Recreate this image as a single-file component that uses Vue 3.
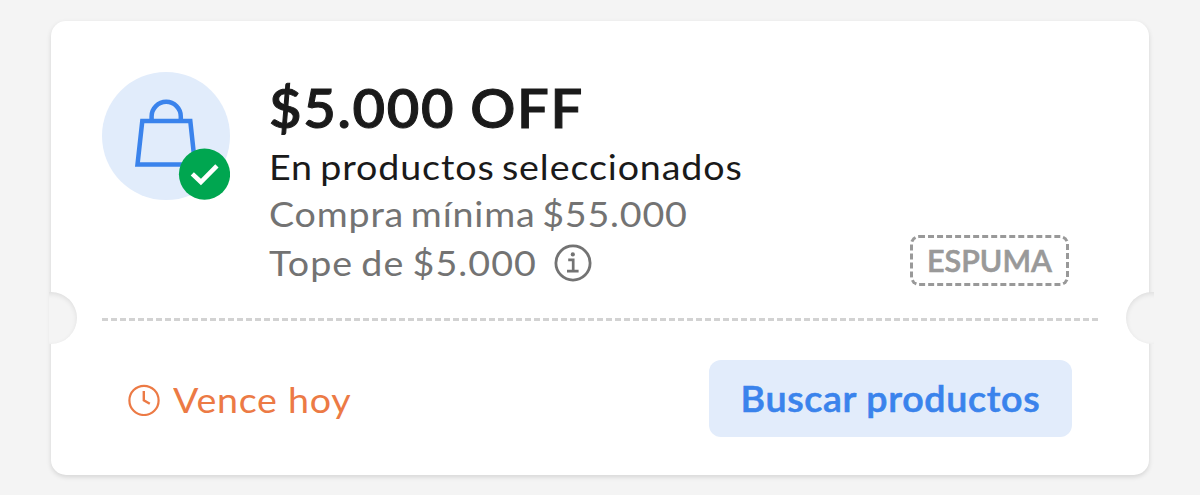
<script setup>
const coupon = {
  title: '$5.000 OFF',
  scope: 'En productos seleccionados',
  minimum: 'Compra mínima $55.000',
  cap: 'Tope de $5.000',
  code: 'ESPUMA',
  expiry: 'Vence hoy',
  action: 'Buscar productos',
}
</script>

<template>
  <main class="page">
    <article class="card">
      <span class="notch left"></span>
      <span class="notch right"></span>
      <section class="top">
        <svg class="badge" width="128" height="128" viewBox="0 0 128 128">
          <circle cx="64" cy="64" r="64" fill="#e1ecfb" />
          <g fill="none" stroke="#3a83ec" stroke-width="4.5">
            <path d="M40.3 49.1H88.3L93 92.6H35.5Z" />
            <path d="M49.6 49V44.4a14.6 14.6 0 0 1 29.2 0V49" />
          </g>
          <circle cx="102.5" cy="102.2" r="25.6" fill="#00a650" />
          <path d="M90.3 101.8L98.9 110L114.9 93.8" fill="none" stroke="#fff" stroke-width="4.6" />
        </svg>
        <div class="details">
          <h1><span class="wide t-title">{{ coupon.title }}</span></h1>
          <p class="dark"><span class="wide t-scope">{{ coupon.scope }}</span></p>
          <p class="min"><span class="wide t-min">{{ coupon.minimum }}</span></p>
          <p class="cap">
            <span class="wide t-cap">{{ coupon.cap }}</span>
            <svg width="38" height="38" viewBox="0 0 38 38" fill="none" stroke="#737373">
              <circle cx="19" cy="19" r="17.1" stroke-width="2.8" />
              <path d="M14.2 15.8H19.2V27M13 27.1H24.6" stroke-width="2.7" />
              <circle cx="18.8" cy="10.4" r="2.1" fill="#737373" stroke="none" />
            </svg>
          </p>
        </div>
        <div class="code"><span>{{ coupon.code }}</span></div>
      </section>
      <div class="divider"></div>
      <section class="bottom">
        <div class="expiry">
          <svg width="32" height="32" viewBox="0 0 32 32" fill="none" stroke="#ec7a45">
            <circle cx="16" cy="16.4" r="14.6" stroke-width="2.2" />
            <path d="M15.8 7V16.3L21.8 19.7" stroke-width="2.4" />
          </svg>
          <span class="wide t-exp">{{ coupon.expiry }}</span>
        </div>
        <button type="button"><span class="wide t-btn">{{ coupon.action }}</span></button>
      </section>
    </article>
  </main>
</template>

<style>
body {
  background: #f4f4f4;
}
</style>

<style scoped>
.page {
  box-sizing: border-box;
  height: 495px;
  padding: 21px 51px 20px;
  background: #f4f4f4;
  font-family: Lato, 'Open Sans', sans-serif;
  overflow: hidden;
}
.card {
  position: relative;
  box-sizing: border-box;
  height: 454px;
  background: #fff;
  border-radius: 15px;
  box-shadow: 0 2px 5px rgba(0, 0, 0, 0.13);
}
.notch {
  position: absolute;
  top: 271px;
  width: 28px;
  height: 52px;
  overflow: hidden;
}
.notch::before {
  content: '';
  position: absolute;
  top: 0;
  width: 52px;
  height: 52px;
  border-radius: 50%;
  background: #f4f4f4;
  box-shadow: inset 0 2px 5px rgba(0, 0, 0, 0.09);
}
.left {
  left: -2px;
}
.left::before {
  right: 0;
}
.right {
  right: -5px;
}
.right::before {
  left: 0;
}
.top {
  display: flex;
  box-sizing: border-box;
  height: 297px;
  padding: 51px 80px 0 51px;
}
.details {
  flex: 1;
  padding: 6px 0 0 39px;
}
.wide {
  display: inline-block;
  transform: scaleX(1.06);
  transform-origin: left center;
}
.t-title {
  letter-spacing: 1.6px;
  word-spacing: -0.8px;
  -webkit-text-stroke: 1px currentColor;
}
.t-scope {
  letter-spacing: 0.83px;
  word-spacing: -3px;
}
.t-min {
  letter-spacing: 0.77px;
  word-spacing: -3.5px;
}
.t-cap {
  width: 267px;
  letter-spacing: 1.02px;
  word-spacing: -2.5px;
}
.t-exp {
  letter-spacing: 0.7px;
}
.t-btn {
  letter-spacing: 0.63px;
  transform-origin: center;
  -webkit-text-stroke: 0.6px currentColor;
}
h1,
p {
  margin: 0;
  white-space: nowrap;
}
h1 {
  height: 65px;
  font-size: 53px;
  line-height: 60px;
  font-weight: 600;
  color: #1a1a1a;
}
p {
  height: 48px;
  font-size: 35.5px;
  line-height: 48px;
  color: #737373;
}
p.dark {
  height: 47px;
  color: #1a1a1a;
}
p.min {
  height: 49px;
}
.cap {
  display: flex;
  align-items: center;
  gap: 18px;
}
.code {
  align-self: flex-end;
  box-sizing: border-box;
  width: 159px;
  height: 51px;
  margin-bottom: 32px;
  border: 3px dashed #999;
  border-radius: 9px;
  text-align: center;
  font-size: 30.5px;
  line-height: 45px;
  font-weight: 600;
  color: #999;
  -webkit-text-stroke: 0.6px currentColor;
}
.divider {
  margin: 0 51px;
  border-top: 3px dashed #d2d2d2;
}
.bottom {
  display: flex;
  align-items: center;
  justify-content: space-between;
  padding: 39px 77px 0;
}
.expiry {
  display: flex;
  align-items: center;
  gap: 13px;
  margin-top: 3px;
  font-size: 35.5px;
  line-height: 46px;
  color: #ec7a45;
}
button {
  width: 363px;
  height: 77px;
  padding: 0;
  border: 0;
  border-radius: 12px;
  background: #e2ecfb;
  color: #3a83ec;
  font: 600 35.5px/77px Lato, 'Open Sans', sans-serif;
}
</style>
